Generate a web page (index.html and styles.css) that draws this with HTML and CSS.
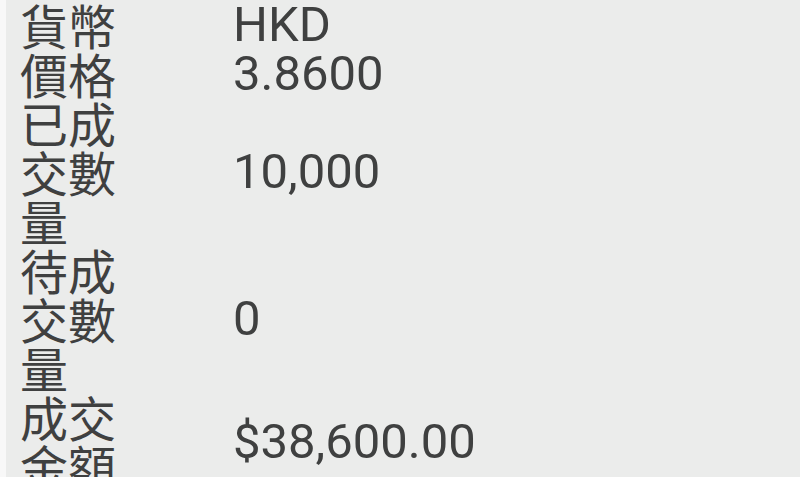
FILE: index.html
```html
<!DOCTYPE html>
<html lang="zh-Hant">
<head>
<meta charset="utf-8">
<title>訂單詳情</title>
<link rel="stylesheet" href="styles.css">
</head>
<body>
<div class="page">
  <div class="details">
    <div class="row"><div class="label">貨幣</div><div class="value">HKD</div></div>
    <div class="row"><div class="label">價格</div><div class="value">3.8600</div></div>
    <div class="row"><div class="label">已成交數量</div><div class="value">10,000</div></div>
    <div class="row"><div class="label">待成交數量</div><div class="value">0</div></div>
    <div class="row"><div class="label">成交金額</div><div class="value">$38,600.00</div></div>
  </div>
</div>
</body>
</html>
```
FILE: styles.css
```css
html, body {
  margin: 0;
  padding: 0;
  height: 100%;
  overflow: hidden;
}
body {
  background: #f8f8f8;
}
.page {
  margin-left: 6px;
  height: 100%;
  background: #ebeceb;
  color: #3f4040;
}
.details {
  padding-left: 14px;
  display: flex;
  flex-direction: column;
}
.row {
  display: grid;
  grid-template-columns: 96px 1fr;
  column-gap: 117px;
  align-items: center;
}
.label {
  font-family: "Noto Sans CJK TC", "Noto Sans CJK SC", sans-serif;
  font-size: 48px;
  line-height: 49px;
  word-break: break-all;
}
.value {
  font-family: Roboto, "Liberation Sans", sans-serif;
  font-size: 49px;
  line-height: 49px;
}
```
